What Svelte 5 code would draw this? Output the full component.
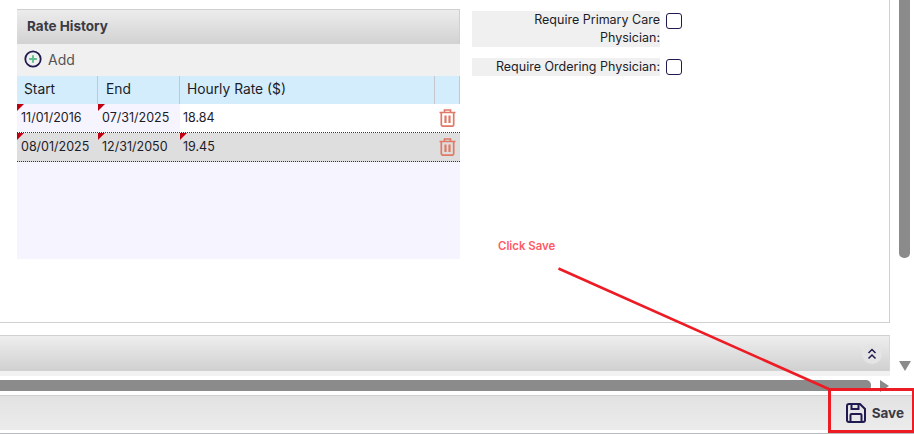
<script lang="ts">
  const rates = [
    { start: '11/01/2016', end: '07/31/2025', rate: '18.84', flagRate: false },
    { start: '08/01/2025', end: '12/31/2050', rate: '19.45', flagRate: true },
  ];
</script>

<div class="page">
  <div class="upper">
    <div class="content">
      <section class="panel">
        <div class="rate-card">
          <div class="card-title">Rate History</div>
          <div class="add-row">
            <svg width="18" height="18" viewBox="0 0 18 18" aria-hidden="true">
              <circle cx="9" cy="9" r="7.7" fill="none" stroke="#1f1a4f" stroke-width="1.8" />
              <path d="M9 5.2v7.600M5.200 9h7.600" stroke="#5fbf8f" stroke-width="1.9" />
            </svg>
            <span>Add</span>
          </div>
          <div class="grid-head">
            <div>Start</div>
            <div class="end-head">End</div>
            <div>Hourly Rate ($)</div>
            <div></div>
          </div>
          <div class="grid-body">
            {#each rates as row, i}
              <div class="grid-row" class:selected={i === 1}>
                <div class="cell tinted flagged">{row.start}</div>
                <div class="cell tinted flagged">{row.end}</div>
                <div class="cell rate" class:flagged={row.flagRate}>{row.rate}</div>
                <div class="cell trash">
                  <svg width="17" height="18" viewBox="0 0 17 18" aria-hidden="true">
                    <path d="M.5 3.500h16M5.500 3.500V1h6v2.500M2.300 3.500v12a1.700 1.700 0 0 0 1.700 1.700h9a1.700 1.700 0 0 0 1.700-1.700v-12" fill="none" stroke="#e07a66" stroke-width="1.700" />
                    <path d="M6.500 6.500v7.500M10.500 6.500v7.500" stroke="#e07a66" stroke-width="2.200" />
                  </svg>
                </div>
              </div>
            {/each}
          </div>
        </div>

        <div class="flags">
          <div class="flag-row">
            <span class="flag-label">Require Primary Care Physician:</span>
            <span class="check"></span>
          </div>
          <div class="flag-row single">
            <span class="flag-label">Require Ordering Physician:</span>
            <span class="check"></span>
          </div>
        </div>
      </section>

      <div class="collapsed-head">
        <span class="collapse-btn">
          <svg width="12" height="14" viewBox="0 0 12 14" aria-hidden="true">
            <path d="M2.500 6 6 2.500 9.500 6M2.500 11.500 6 8l3.500 3.500" fill="none" stroke="#1f1a4f" stroke-width="1.500" />
          </svg>
        </span>
      </div>
      <div class="strip"></div>
      <div class="hscroll">
        <div class="hthumb"></div>
        <div class="harrow"></div>
      </div>
    </div>

    <div class="vscroll">
      <div class="vthumb"></div>
      <div class="varrow"></div>
    </div>
  </div>

  <footer class="footer">
    <button class="save" type="button">
      <svg width="20" height="20" viewBox="0 0 20 20" aria-hidden="true">
        <path d="M1 3a2 2 0 0 1 2-2h11l5 5v11a2 2 0 0 1-2 2H3a2 2 0 0 1-2-2z" fill="none" stroke="#1f1a4f" stroke-width="2" />
        <path d="M5.500 1.500v4.500h7V1.500M4.500 18.500v-6.500a1 1 0 0 1 1-1h9a1 1 0 0 1 1 1v6.500" fill="none" stroke="#1f1a4f" stroke-width="2" />
      </svg>
      <span>Save</span>
    </button>
  </footer>

  <div class="note">Click Save</div>
  <svg class="arrow-line" width="914" height="434" viewBox="0 0 914 434" aria-hidden="true">
    <path d="M558.500 268.500 831 390" stroke="#ed1c24" stroke-width="2.600" fill="none" />
  </svg>
  <div class="highlight"></div>
</div>

<style>
  :global(body) {
    margin: 0;
    background: #fff;
  }

  .page {
    position: relative;
    width: 914px;
    height: 434px;
    overflow: hidden;
    display: flex;
    flex-direction: column;
    font-family: Inter, "Liberation Sans", sans-serif;
    font-size: 12.500px;
    color: #1c1c28;
  }

  .upper {
    display: flex;
    height: 395px;
  }

  .content {
    width: 890px;
    display: flex;
    flex-direction: column;
  }

  .panel {
    box-sizing: border-box;
    height: 323px;
    flex: none;
    border-right: 1px solid #d0d0d0;
    border-bottom: 1px solid #d0d0d0;
    padding: 9px 0 0 17px;
    display: flex;
    gap: 12px;
    align-items: flex-start;
  }

  .rate-card {
    width: 443px;
    flex: none;
  }

  .card-title {
    box-sizing: border-box;
    height: 35px;
    padding: 0 0 2px 10px;
    display: flex;
    align-items: center;
    font-weight: 700;
    font-size: 13.500px;
    color: #3a3a44;
    background: linear-gradient(#ececec, #d2d2d2);
    border-top: 1px solid #d0d0d0;
    border-right: 1px solid #d0d0d0;
  }

  .add-row {
    box-sizing: border-box;
    height: 32px;
    padding: 0 0 2px 7px;
    display: flex;
    align-items: center;
    gap: 6px;
    background: #f0f0f0;
    color: #555;
    font-size: 14px;
  }

  .grid-head,
  .grid-row {
    display: grid;
    grid-template-columns: 81px 82px 255px 25px;
  }

  .grid-head {
    height: 28px;
    background: #d4edfc;
    font-size: 13.800px;
  }

  .grid-head > div {
    box-sizing: border-box;
    display: flex;
    align-items: center;
    padding: 0 0 2px 7px;
    border-right: 1px solid #c4c8cc;
  }

  .grid-head > .end-head {
    padding-left: 8px;
  }

  .grid-body {
    height: 155px;
    background: #f6f5ff;
  }

  .grid-row {
    box-sizing: border-box;
    height: 29px;
    background: #fff;
    border-bottom: 1px dotted #333;
  }

  .grid-row.selected {
    background: #dedede;
  }

  .cell {
    position: relative;
    box-sizing: border-box;
    display: flex;
    align-items: center;
    padding: 0 0 1px 4px;
    min-width: 0;
  }

  .cell.rate {
    padding-left: 3px;
  }

  .cell.tinted {
    background: #f6f5ff;
  }

  .selected .cell.tinted {
    background: #dedede;
  }

  .cell.flagged::before {
    content: "";
    position: absolute;
    left: 0;
    top: 0;
    border-style: solid;
    border-width: 7px 7px 0 0;
    border-color: #c00010 transparent transparent transparent;
  }

  .trash {
    padding-left: 4px;
  }

  .flags {
    display: flex;
    flex-direction: column;
    gap: 11px;
    padding-top: 2px;
  }

  .flag-row {
    display: flex;
    align-items: flex-start;
    gap: 6px;
  }

  .flag-label {
    width: 188px;
    background: #f0f0f0;
    text-align: right;
    line-height: 18px;
  }

  .check {
    box-sizing: border-box;
    width: 16px;
    height: 16px;
    margin-top: 2px;
    border: 1.500px solid #1f1a4f;
    border-radius: 3px;
    background: #fff;
  }

  .single .check {
    margin-top: 1px;
  }

  .collapsed-head {
    box-sizing: border-box;
    height: 36px;
    margin-top: 12px;
    flex: none;
    display: flex;
    align-items: center;
    justify-content: flex-end;
    padding-right: 7px;
    background: linear-gradient(#eeeeee, #d0d0d0);
    border-top: 1px solid #d0d0d0;
    border-right: 1px solid #d8d8d8;
  }

  .collapse-btn {
    width: 20px;
    height: 20px;
    border-radius: 50%;
    background: #e4e4e4;
    display: flex;
    align-items: center;
    justify-content: center;
  }

  .strip {
    height: 5px;
    flex: none;
    background: #f2f2f2;
  }

  .hscroll {
    height: 11px;
    margin-top: 4px;
    flex: none;
    display: flex;
    align-items: center;
  }

  .hthumb {
    width: 871px;
    height: 11px;
    background: #8b8b8b;
    border-radius: 0 5px 5px 0;
  }

  .harrow {
    margin-left: 9px;
    border-style: solid;
    border-width: 6px 0 6px 9px;
    border-color: transparent transparent transparent #8b8b8b;
  }

  .vscroll {
    width: 24px;
    padding-left: 9px;
    box-sizing: border-box;
  }

  .vthumb {
    width: 11px;
    height: 258px;
    background: #8b8b8b;
    border-radius: 0 0 5px 5px;
  }

  .varrow {
    margin-top: 103px;
    border-style: solid;
    border-width: 10px 6.500px 0 6.500px;
    border-color: #8b8b8b transparent transparent transparent;
    width: 0;
  }

  .footer {
    box-sizing: border-box;
    height: 39px;
    display: flex;
    justify-content: flex-end;
    background: linear-gradient(#e2e2e2, #ececec);
    background-size: 100% 34px;
    background-repeat: no-repeat;
    border-top: 1px solid #d0d0d0;
    border-bottom: 1px solid #b8bcc0;
  }

  .save {
    display: flex;
    align-items: center;
    gap: 6px;
    height: 34px;
    padding: 0 10px 0 0;
    margin: 0;
    border: 0;
    background: none;
    font: 700 13.500px Inter, "Liberation Sans", sans-serif;
    color: #3a3a44;
  }

  .note {
    position: absolute;
    left: 498px;
    top: 239px;
    font-size: 11.400px;
    font-weight: 600;
    color: #ff5a66;
  }

  .arrow-line {
    position: absolute;
    left: 0;
    top: 0;
  }

  .highlight {
    position: absolute;
    left: 828px;
    top: 388px;
    width: 86px;
    height: 45px;
    box-sizing: border-box;
    border: 3.500px solid #ed1c24;
    border-right-width: 2px;
  }
</style>
